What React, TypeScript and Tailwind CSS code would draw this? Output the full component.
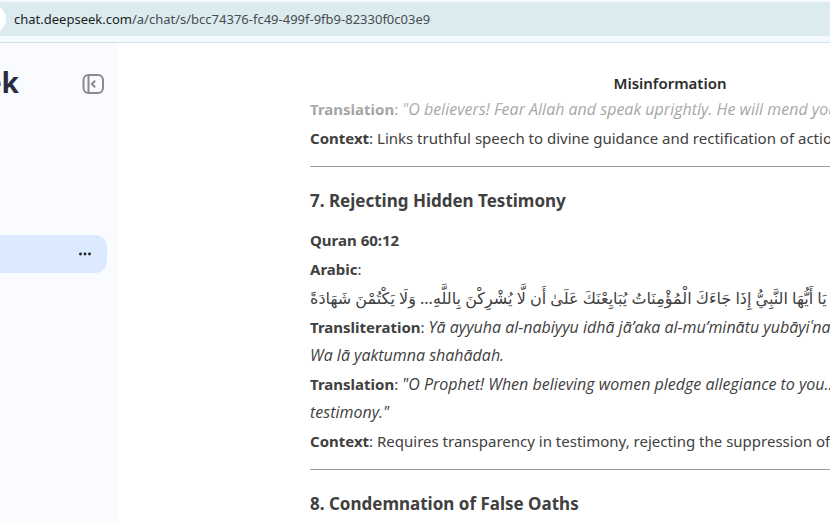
import React from 'react';

interface Entry {
  label: string;
  text: string[];
}

const entries: Entry[] = [
  { label: 'Transliteration', text: ['Yā ayyuha al-nabiyyu idhā jā’aka al-mu’minātu yubāyiʿnaka', 'Wa lā yaktumna shahādah.'] },
  { label: 'Translation', text: ['"O Prophet! When believing women pledge allegiance to you...', 'testimony."'] },
];

const AddressBar = () => (
  <div className="border-b border-[#d5e3e6] bg-[#f3f9fc] pt-0.5 pb-1.5">
    <div className="relative flex h-[34px] items-center bg-[#dcebef]">
      <span className="absolute -left-6 size-[30px] rounded-full bg-white" />
      <div className="pl-3.5 text-[13px] leading-5 whitespace-nowrap text-[#474d50]">
        <span className="text-[#1b1f21]">chat.deepseek.com</span>/a/chat/s/bcc74376-fc49-499f-9fb9-82330f0c03e9
      </div>
    </div>
  </div>
);

const Sidebar = () => (
  <aside className="flex w-[117px] shrink-0 flex-col bg-[#f9fbff]">
    <div className="flex h-[82px] items-center justify-between pr-3">
      <div className="flex w-[19px] justify-end pb-1 text-[28px] font-bold text-[#2a2c3d]">deepseek</div>
      <button aria-label="Collapse sidebar" className="text-[#8b8b8b]">
        <svg width="24" height="24" viewBox="0 0 24 24" fill="none" stroke="currentColor" strokeWidth="2">
          <rect x="2.5" y="3" width="19.5" height="18" rx="5" />
          <path d="M7.5 3v18M14.2 8.7 10.8 12l3.4 3.3" />
        </svg>
      </button>
    </div>
    <div className="mt-[110px] mr-2.5 flex h-[38px] items-center justify-end rounded-r-xl bg-[#dbeafe] pr-4">
      <button aria-label="Chat options" className="text-[#202020]">
        <svg width="12" height="12" viewBox="0 0 12 12" fill="currentColor">
          <circle cx="1.5" cy="6" r="1.4" />
          <circle cx="6" cy="6" r="1.4" />
          <circle cx="10.5" cy="6" r="1.4" />
        </svg>
      </button>
    </div>
  </aside>
);

const Quote = ({ children }: { children: React.ReactNode }) => (
  <em className="font-['Open_Sans','Noto_Sans',sans-serif] text-base leading-7">{children}</em>
);

export default function App() {
  return (
    <div className="flex h-screen flex-col overflow-hidden bg-white font-['Noto_Sans','DejaVu_Sans',sans-serif]">
      <AddressBar />
      <div className="flex min-h-0 flex-1">
        <Sidebar />
        <main className="min-w-0 flex-1 overflow-hidden whitespace-nowrap text-[#404040]">
          <header className="relative z-10 flex h-[52px] items-end justify-center pl-[393px]">
            <h1 className="text-[15px] leading-6 font-semibold text-[#2b2b2b]">Misinformation</h1>
            <div className="absolute inset-x-0 top-full h-7 bg-linear-to-b from-white/70 to-white/40" />
          </header>
          <article className="pl-[193px] text-[15px] leading-7">
            <div className="flex flex-col gap-px">
              <p><strong>Translation</strong>: <Quote>"O believers! Fear Allah and speak uprightly. He will mend your</Quote></p>
              <p><strong>Context</strong>: Links truthful speech to divine guidance and rectification of actions</p>
            </div>
            <hr className="mt-3.5 mb-5 border-[#9c9c9c]" />
            <h2 className="mb-[11px] text-[17px] leading-7 font-bold">7. Rejecting Hidden Testimony</h2>
            <div className="flex flex-col gap-px">
              <p><strong>Quran 60:12</strong></p>
              <p><strong>Arabic</strong>:</p>
              <p className="text-base leading-7"><bdi dir="rtl" lang="ar">يَا أَيُّهَا النَّبِيُّ إِذَا جَاءَكَ الْمُؤْمِنَاتُ يُبَايِعْنَكَ عَلَىٰ أَن لَّا يُشْرِكْنَ بِاللَّهِ... وَلَا يَكْتُمْنَ شَهَادَةً</bdi></p>
              {entries.map(e => (
                <p key={e.label}>
                  <strong>{e.label}</strong>: <Quote>{e.text[0]}<br />{e.text[1]}</Quote>
                </p>
              ))}
              <p><strong>Context</strong>: Requires transparency in testimony, rejecting the suppression of truth</p>
            </div>
            <hr className="mt-3.5 mb-5 border-[#9c9c9c]" />
            <h2 className="text-[17px] leading-7 font-bold">8. Condemnation of False Oaths</h2>
          </article>
        </main>
      </div>
    </div>
  );
}
